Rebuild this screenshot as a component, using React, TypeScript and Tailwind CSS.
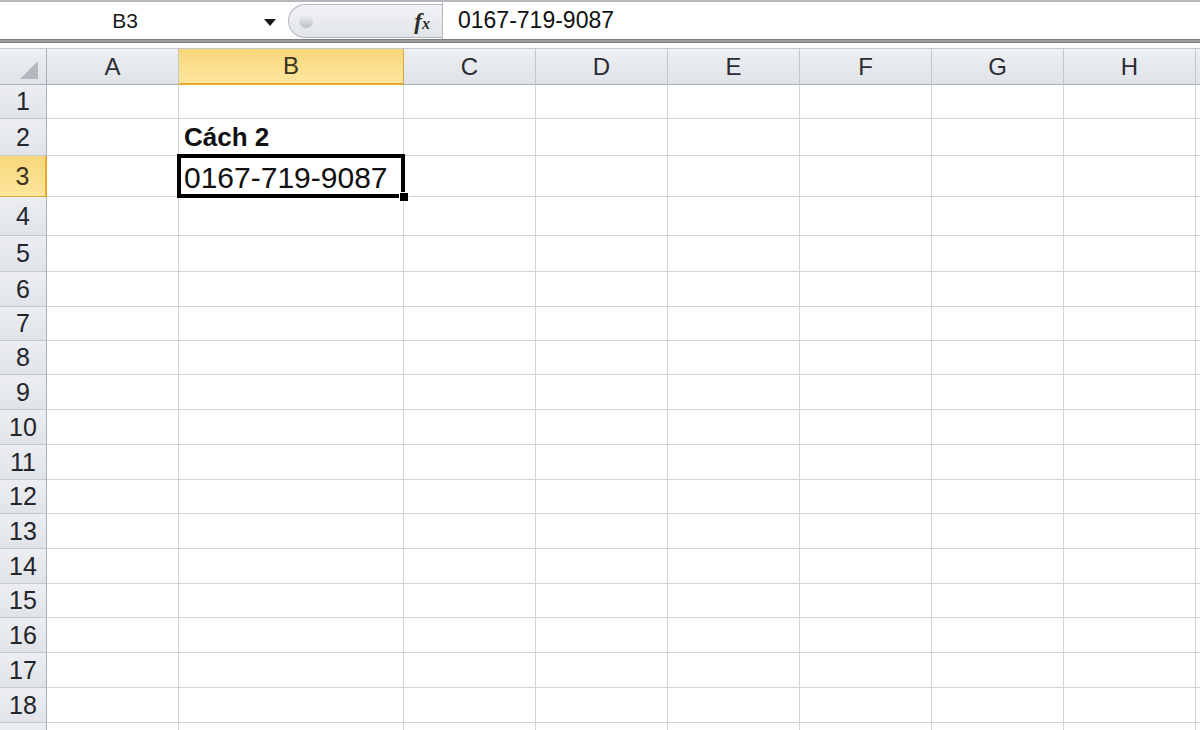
import React from "react";

// Column layout of the sheet (widths in px, header column is separate)
const columns = [
  { name: "A", width: 132 },
  { name: "B", width: 225 },
  { name: "C", width: 132 },
  { name: "D", width: 132 },
  { name: "E", width: 132 },
  { name: "F", width: 132 },
  { name: "G", width: 132 },
  { name: "H", width: 132 },
  { name: "", width: 132 },
];

const rowHeights = [34, 37, 41, 39, 36, 35, 34, 34, 35, 35, 35, 34, 35, 35, 34, 35, 35, 35, 35];

function FormulaBar() {
  return (
    <div className="flex flex-col">
      <div className="h-[2px] bg-[#b4b8be]" />
      <div className="flex h-[37px] items-stretch bg-white">
        {/* name box */}
        <div className="relative flex w-[288px] items-center">
          <div className="w-[250px] text-center text-[21px] leading-none text-[#1a1a1a]">B3</div>
          <svg className="absolute left-[264px] top-[17px]" width="12" height="7" viewBox="0 0 12 7">
            <path d="M0 0 L12 0 L6 7 Z" fill="#1a1a1a" />
          </svg>
        </div>
        {/* pill with fx */}
        <div className="mt-[2px] flex h-[34px] w-[154px] items-center rounded-l-[17px] border border-r-0 border-[#b3b7bd] bg-gradient-to-b from-[#f1f2f4] to-[#e2e5e9]">
          <div className="ml-[10px] h-[14px] w-[14px] rounded-full bg-gradient-to-b from-[#f5f6f7] to-[#b9bdc3]" />
          <div className="ml-auto mr-[12px] font-['Liberation_Serif',serif] text-[23px] font-bold italic leading-none text-[#2b2b2b]">
            f<span className="text-[16px]">x</span>
          </div>
        </div>
        <div className="w-px bg-[#b3b7bd]" />
        <div className="flex flex-1 items-center pl-[15px] text-[23px] leading-none text-[#111]">
          0167-719-9087
        </div>
      </div>
      <div className="h-[4px] border-t border-b border-[#7e7e7e] bg-[#9c9c9c]" />
      <div className="h-[5px] bg-white" />
    </div>
  );
}

function ColumnHeader() {
  return (
    <div className="flex h-[37px] border-t border-[#c3c8cf]">
      <div className="relative w-[47px] shrink-0 border-r border-b border-[#a7b0bc] bg-gradient-to-b from-[#eef0f3] to-[#dfe2e7]">
        <svg className="absolute right-[8px] bottom-[5px]" width="18" height="18" viewBox="0 0 18 18">
          <path d="M18 0 L18 18 L0 18 Z" fill="#b5b9bf" />
        </svg>
      </div>
      {columns.map((c, i) => {
        const selected = c.name === "B";
        return (
          <div
            key={i}
            style={{ width: c.width }}
            className={
              selected
                ? "flex shrink-0 items-center justify-center border-r border-b-2 border-r-[#d9a640] border-b-[#e7a82e] bg-gradient-to-b from-[#f8d77a] to-[#fde69c] text-[24px] leading-none text-[#3a3420]"
                : "flex shrink-0 items-center justify-center border-r border-b border-r-[#c2c7ce] border-b-[#a7b0bc] bg-gradient-to-b from-[#eef0f3] to-[#dfe2e7] text-[24px] leading-none text-[#2a2d33]"
            }
          >
            {c.name}
          </div>
        );
      })}
    </div>
  );
}

function Cell({ col, row }: { col: string; row: number }) {
  if (col === "B" && row === 2) {
    return (
      <div className="flex h-full items-end pb-[5px] pl-[5px] text-[26px] font-bold leading-none text-[#111]">
        Cách 2
      </div>
    );
  }
  if (col === "B" && row === 3) {
    return (
      <div className="relative flex h-full items-end pb-[3px] pl-[5px] text-[30px] leading-none text-[#111]">
        0167-719-9087
        <div className="pointer-events-none absolute -left-[2px] -top-[2px] -right-[2px] -bottom-[2px] z-10 border-[4px] border-black" />
        <div className="absolute -right-[6px] -bottom-[6px] z-20 h-[10px] w-[10px] border border-white bg-black" />
      </div>
    );
  }
  return null;
}

export default function App() {
  return (
    <div className="h-[730px] w-[1200px] overflow-hidden bg-white font-['Liberation_Sans',Arial,sans-serif]">
      <FormulaBar />
      <ColumnHeader />
      {rowHeights.map((h, i) => {
        const row = i + 1;
        const selected = row === 3;
        return (
          <div key={row} className={selected ? "relative z-10 flex" : "flex"} style={{ height: h }}>
            <div
              className={
                selected
                  ? "flex w-[47px] shrink-0 items-center justify-center border-r-2 border-b border-r-[#e7a82e] border-b-[#d9a640] bg-gradient-to-b from-[#f8d77a] to-[#fde69c] text-[25px] leading-none text-[#3a3420]"
                  : "flex w-[47px] shrink-0 items-center justify-center border-r border-b border-r-[#a7b0bc] border-b-[#c2c7ce] bg-gradient-to-b from-[#eceef2] to-[#e0e3e8] text-[25px] leading-none text-[#22252a]"
              }
            >
              {row <= 18 ? row : ""}
            </div>
            {columns.map((c, j) => (
              <div
                key={j}
                style={{ width: c.width }}
                className={
                  c.name === "B" && selected
                    ? "relative z-10 shrink-0 border-r border-b border-[#d4d5d7]"
                    : "relative shrink-0 border-r border-b border-[#d4d5d7]"
                }
              >
                <Cell col={c.name} row={row} />
              </div>
            ))}
          </div>
        );
      })}
    </div>
  );
}
